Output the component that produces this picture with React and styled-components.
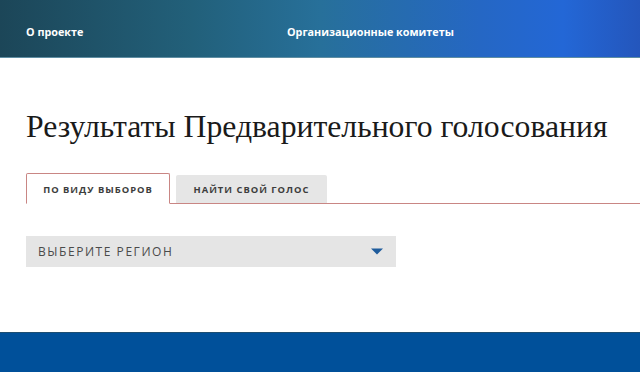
import React, { useState } from "react";
import styled, { createGlobalStyle } from "styled-components";

const Global = createGlobalStyle`
  html, body { margin: 0; padding: 0; background: #fff; }
  body { font-family: "Open Sans", "Liberation Sans", sans-serif; }
  * { box-sizing: border-box; }
`;

const Page = styled.div`
  width: 640px;
  height: 372px;
  display: flex;
  flex-direction: column;
  overflow: hidden;
`;

const Header = styled.header`
  height: 58px;
  flex: none;
  display: flex;
  align-items: center;
  padding: 0 0 0 26px;
  background: linear-gradient(90deg, #1c4658 0%, #22607a 30%, #27709a 50%, #2567c4 75%, #2367d6 88%, #2456bc 100%);
  border-bottom: 1px solid #5f8ea3;
`;

const NavLink = styled.a`
  color: #fff;
  font-family: "Open Sans", sans-serif;
  font-weight: 700;
  font-size: 10.8px;
  text-decoration: none;
  margin-top: 6px;
  width: ${(p) => p.$w}px;
`;

const Main = styled.main`
  flex: 1;
  padding: 0 0 0 26px;
  display: flex;
  flex-direction: column;
`;

const Title = styled.h1`
  margin: 50px 0 0 0;
  font-family: "Liberation Serif", serif;
  font-weight: 400;
  font-size: 31.7px;
  line-height: 38px;
  color: #1a1a1a;
`;

const TabBar = styled.div`
  margin-top: 27px;
  display: flex;
  align-items: flex-end;
  gap: 6px;
  border-bottom: 1px solid #c98684;
  height: 31px;
`;

const Tab = styled.button`
  all: unset;
  box-sizing: border-box;
  height: ${(p) => (p.$active ? 31 : 28)}px;
  width: ${(p) => p.$w}px;
  display: flex;
  align-items: center;
  justify-content: center;
  font-family: "Open Sans", sans-serif;
  font-weight: 700;
  font-size: 9.4px;
  letter-spacing: 1px;
  color: #3d3d3d;
  background: ${(p) => (p.$active ? "#fff" : "#e6e6e6")};
  border: ${(p) => (p.$active ? "1px solid #c98684" : "none")};
  border-bottom: ${(p) => (p.$active ? "1px solid #fff" : "none")};
  border-radius: 2px 2px 0 0;
  margin-bottom: ${(p) => (p.$active ? -1 : 0)}px;
  padding-top: ${(p) => (p.$active ? 1 : 0)}px;
  cursor: pointer;
`;

const Select = styled.div`
  margin-top: 32px;
  width: 370px;
  height: 31px;
  background: #e5e5e5;
  display: flex;
  align-items: center;
  justify-content: space-between;
  padding: 0 13px 0 12px;
  font-family: "Open Sans", sans-serif;
  font-size: 12px;
  letter-spacing: 1.55px;
  color: #4a4a4a;
`;

const Footer = styled.footer`
  height: 40px;
  flex: none;
  background: #00509a;
  border-top: 1px solid #1d4e72;
`;

export default function App() {
  const [tab, setTab] = useState(0);
  return (
    <Page>
      <Global />
      <Header>
        <NavLink href="#" $w={261}>О проекте</NavLink>
        <NavLink href="#" $w={200}>Организационные комитеты</NavLink>
      </Header>
      <Main>
        <Title>Результаты Предварительного голосования</Title>
        <TabBar>
          <Tab $active={tab === 0} $w={144} onClick={() => setTab(0)}>ПО ВИДУ ВЫБОРОВ</Tab>
          <Tab $active={tab === 1} $w={151} onClick={() => setTab(1)}>НАЙТИ СВОЙ ГОЛОС</Tab>
        </TabBar>
        <Select>
          <span>ВЫБЕРИТЕ РЕГИОН</span>
          <svg width="12" height="7" viewBox="0 0 12 7">
            <path d="M0 0.5 H12 L6 6.5 Z" fill="#1f5c9c" />
          </svg>
        </Select>
      </Main>
      <Footer />
    </Page>
  );
}
